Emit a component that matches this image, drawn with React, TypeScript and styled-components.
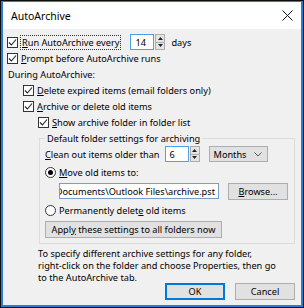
import React from 'react';
import styled, { createGlobalStyle } from 'styled-components';

const GlobalStyle = createGlobalStyle`
  html, body {
    margin: 0;
    padding: 0;
    background: #ffffff;
  }
  body {
    font-family: "Noto Sans", "Open Sans", sans-serif;
    font-size: 9.2px;
    color: #000000;
  }
`;

const Frame = styled.div`
  width: 304px;
  height: 308px;
  box-sizing: border-box;
  border: 1px solid #0e0e0e;
  display: flex;
`;

const Window = styled.div`
  flex: 1;
  display: flex;
  flex-direction: column;
  border: 2px solid #2b7bd3;
  border-top-width: 1px;
  background: #f0f0f0;
`;

const TitleBar = styled.div`
  height: 27px;
  background: #ffffff;
  display: flex;
  align-items: center;
  padding: 0 8px 0 8px;
  font-size: 10.5px;
`;

const Title = styled.span`
  flex: 1;
`;

const Body = styled.div`
  flex: 1;
  display: flex;
  flex-direction: column;
  padding: 5px 6px 0 4px;
`;

const Row = styled.div<{ $indent?: number; $h?: number }>`
  display: flex;
  align-items: center;
  height: ${p => p.$h ?? 16}px;
  padding-left: ${p => p.$indent ?? 0}px;
  white-space: nowrap;
`;

const Box = styled.span`
  width: 9px;
  height: 9px;
  border: 1px solid #333333;
  background: #ffffff;
  display: inline-flex;
  align-items: center;
  justify-content: center;
  margin-right: 3px;
  flex-shrink: 0;
`;

const Radio = styled.span<{ $on?: boolean }>`
  width: 9px;
  height: 9px;
  border: 1px solid #333333;
  border-radius: 50%;
  background: #ffffff;
  display: inline-flex;
  align-items: center;
  justify-content: center;
  margin-right: 3px;
  flex-shrink: 0;

  &::after {
    content: '';
    width: 5px;
    height: 5px;
    border-radius: 50%;
    background: ${p => (p.$on ? '#000000' : 'transparent')};
  }
`;

const Focus = styled.span`
  outline: 1px dotted #333333;
  padding: 0 1px;
`;

const Key = styled.u`
  text-decoration-thickness: 1px;
  text-underline-offset: 1px;
`;

const Spin = styled.div<{ $w: number }>`
  display: flex;
  align-items: stretch;
  height: 16px;
  margin-left: ${p => p.$w}px;
`;

const NumField = styled.div`
  width: 24px;
  box-sizing: border-box;
  border: 1px solid #4d9fe6;
  background: #ffffff;
  padding-left: 4px;
  display: flex;
  align-items: center;
`;

const Arrows = styled.div`
  width: 10px;
  margin-left: 1px;
  display: flex;
  flex-direction: column;
  border: 1px solid #adadad;
  background: #e5e5e5;
  box-sizing: border-box;
`;

const ArrowHalf = styled.div`
  flex: 1;
  display: flex;
  align-items: center;
  justify-content: center;
  & + & {
    border-top: 1px solid #adadad;
  }
`;

const Group = styled.fieldset`
  margin: 2px 0 0 32px;
  padding: 0 0 4px 5px;
  border: 1px solid #dcdcdc;
  min-width: 0;
`;

const Legend = styled.legend`
  padding: 0 2px;
  margin-left: 0;
`;

const Select = styled.div`
  width: 59px;
  height: 16px;
  box-sizing: border-box;
  margin-left: 9px;
  border: 1px solid #adadad;
  background: #e1e1e1;
  display: flex;
  align-items: center;
  justify-content: space-between;
  padding: 0 5px 0 4px;
`;

const PathField = styled.div`
  width: 160px;
  height: 16px;
  box-sizing: border-box;
  border: 1px solid #7a9cc7;
  background: #ffffff;
  overflow: hidden;
  display: flex;
  justify-content: flex-end;
  align-items: center;
  padding-right: 3px;
`;

const Button = styled.div<{ $w: number; $default?: boolean }>`
  width: ${p => p.$w}px;
  height: 17px;
  box-sizing: border-box;
  border: 1px solid ${p => (p.$default ? '#0078d7' : '#adadad')};
  box-shadow: ${p => (p.$default ? 'inset 0 0 0 1px #0078d7' : 'none')};
  background: #e1e1e1;
  display: flex;
  align-items: center;
  justify-content: center;
  flex-shrink: 0;
`;

const Info = styled.div`
  margin: 4px 0 0 31px;
  line-height: 12px;
`;

const Footer = styled.div`
  display: flex;
  justify-content: flex-end;
  gap: 10px;
  margin-top: -1px;
`;

const Check = () => (
  <svg width="9" height="9" viewBox="0 0 9 9">
    <path d="M1 4.5 L3.4 7 L8 1.5" fill="none" stroke="#222" strokeWidth="1.1" />
  </svg>
);

const Tri = ({ up }: { up?: boolean }) => (
  <svg width="5" height="3" viewBox="0 0 5 3">
    <path d={up ? 'M0 3 L2.5 0 L5 3 Z' : 'M0 0 L2.5 3 L5 0 Z'} fill="#222" />
  </svg>
);

const Spinner = ({ value, gap }: { value: string; gap: number }) => (
  <Spin $w={gap}>
    <NumField>{value}</NumField>
    <Arrows>
      <ArrowHalf>
        <Tri up />
      </ArrowHalf>
      <ArrowHalf>
        <Tri />
      </ArrowHalf>
    </Arrows>
  </Spin>
);

export default function App() {
  return (
    <>
      <GlobalStyle />
      <Frame>
        <Window>
          <TitleBar>
            <Title>AutoArchive</Title>
            <svg width="11" height="11" viewBox="0 0 11 11">
              <path d="M0.5 0.5 L10.5 10.5 M10.5 0.5 L0.5 10.5" stroke="#111" strokeWidth="1" />
            </svg>
          </TitleBar>
          <Body>
            <Row>
              <Box>
                <Check />
              </Box>
              <Focus>
                <Key>R</Key>un AutoArchive every
              </Focus>
              <Spinner value="14" gap={10} />
              <span style={{ marginLeft: 6 }}>days</span>
            </Row>
            <Row>
              <Box>
                <Check />
              </Box>
              <span>
                <Key>P</Key>rompt before AutoArchive runs
              </span>
            </Row>
            <Row $indent={1}>During AutoArchive:</Row>
            <Row $indent={16}>
              <Box>
                <Check />
              </Box>
              <span>
                <Key>D</Key>elete expired items (email folders only)
              </span>
            </Row>
            <Row $indent={16}>
              <Box>
                <Check />
              </Box>
              <span>
                <Key>A</Key>rchive or delete old items
              </span>
            </Row>
            <Row $indent={31}>
              <Box>
                <Check />
              </Box>
              <span>
                <Key>S</Key>how archive folder in folder list
              </span>
            </Row>
            <Group>
              <Legend>Default folder settings for archiving</Legend>
              <Row $h={18}>
                <span>
                  <Key>C</Key>lean out items older than
                </span>
                <Spinner value="6" gap={5} />
                <Select>
                  <span>Months</span>
                  <svg width="8" height="5" viewBox="0 0 8 5">
                    <path d="M0.5 0.5 L4 4 L7.5 0.5" fill="none" stroke="#555" strokeWidth="1" />
                  </svg>
                </Select>
              </Row>
              <Row $h={18}>
                <Radio $on />
                <span>
                  <Key>M</Key>ove old items to:
                </span>
              </Row>
              <Row $h={20} $indent={14}>
                <PathField>Documents\Outlook Files\archive.pst</PathField>
                <Button $w={60} style={{ marginLeft: 9 }}>
                  <span>
                    <Key>B</Key>rowse...
                  </span>
                </Button>
              </Row>
              <Row $h={18}>
                <Radio />
                <span>
                  Permanently delet<Key>e</Key> old items
                </span>
              </Row>
              <Row $h={20}>
                <Button $w={177}>
                  <span>
                    Appl<Key>y</Key> these settings to all folders now
                  </span>
                </Button>
              </Row>
            </Group>
            <Info>
              To specify different archive settings for any folder,
              <br />
              right-click on the folder and choose Properties, then go
              <br />
              to the AutoArchive tab.
            </Info>
            <Footer>
              <Button $w={60} $default>
                OK
              </Button>
              <Button $w={60}>Cancel</Button>
            </Footer>
          </Body>
        </Window>
      </Frame>
    </>
  );
}
